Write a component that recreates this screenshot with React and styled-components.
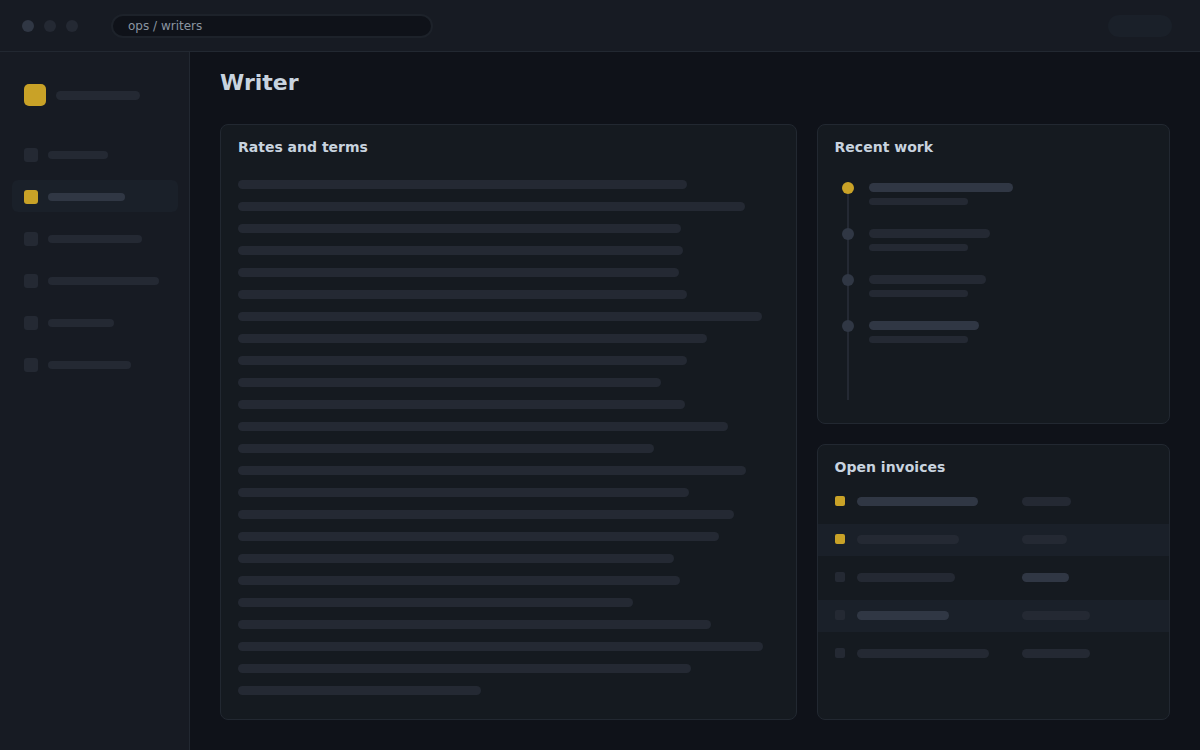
import React from "react";
import styled, { createGlobalStyle, ThemeProvider } from "styled-components";

const theme = {
  page: "#0f1219",
  chrome: "#171b23",
  card: "#151a20",
  line: "#222831",
  raised: "#1a2029",
  muted: "#242933",
  strong: "#303744",
  accent: "#c9a227",
  heading: "#c8d3df",
  text: "#8b95a1",
};

const GlobalStyle = createGlobalStyle`
  *, *::before, *::after { box-sizing: border-box; }
  body {
    margin: 0;
    background: ${theme.page};
    font-family: "DejaVu Sans", sans-serif;
  }
  ul, ol { list-style: none; margin: 0; padding: 0; }
`;

const Shell = styled.div`
  display: flex;
  flex-direction: column;
  min-height: 100vh;
`;

const TopBar = styled.header`
  display: flex;
  align-items: center;
  height: 52px;
  padding: 0 28px 0 22px;
  background: ${(p) => p.theme.chrome};
  border-bottom: 1px solid ${(p) => p.theme.line};
`;

const WindowDots = styled.div`
  display: flex;
  gap: 10px;
  margin-right: 33px;
`;

const WindowDot = styled.span`
  width: 12px;
  height: 12px;
  border-radius: 50%;
  background: ${(p) => (p.$strong ? p.theme.strong : p.theme.muted)};
`;

const AddressInput = styled.input`
  width: 322px;
  height: 24px;
  padding: 0 15px;
  border: 2px solid #1d222a;
  border-radius: 12px;
  background: ${(p) => p.theme.page};
  color: ${(p) => p.theme.text};
  font: 12px "DejaVu Sans", sans-serif;
  outline: none;
`;

const AccountButton = styled.button`
  width: 64px;
  height: 22px;
  margin-left: auto;
  padding: 0;
  border: 0;
  border-radius: 11px;
  background: ${(p) => p.theme.raised};
`;

const Body = styled.div`
  display: flex;
  flex: 1;
`;

const Sidebar = styled.aside`
  flex: none;
  width: 190px;
  padding: 32px 11px 32px 12px;
  background: ${(p) => p.theme.chrome};
  border-right: 1px solid ${(p) => p.theme.line};
`;

const Brand = styled.div`
  display: flex;
  align-items: center;
  gap: 10px;
  margin-bottom: 32px;
  padding: 0 12px;
`;

const BrandMark = styled.span`
  width: 22px;
  height: 22px;
  border-radius: 5px;
  background: ${(p) => p.theme.accent};
`;

const Bar = styled.span`
  display: block;
  width: ${(p) => p.$width};
  height: ${(p) => p.$height || 9}px;
  border-radius: 5px;
  background: ${(p) => (p.$strong ? p.theme.strong : p.theme.muted)};
`;

const NavList = styled.ul`
  display: flex;
  flex-direction: column;
  gap: 10px;
`;

const NavLink = styled.a`
  display: flex;
  align-items: center;
  gap: 10px;
  height: 32px;
  padding: 2px 12px 0;
  border-radius: 6px;
  background: ${(p) => (p.$active ? p.theme.raised : "transparent")};
`;

const Marker = styled.span`
  width: ${(p) => p.$size}px;
  height: ${(p) => p.$size}px;
  border-radius: ${(p) => p.$radius}px;
  background: ${(p) => (p.$active ? p.theme.accent : p.theme.muted)};
`;

const Main = styled.main`
  display: flex;
  flex: 1;
  flex-direction: column;
  min-width: 0;
  padding: 16px 30px 30px;
`;

const PageTitle = styled.h1`
  margin: 0 0 26px;
  color: ${(p) => p.theme.heading};
  font-size: 22px;
  line-height: 30px;
`;

const Columns = styled.div`
  display: grid;
  flex: 1;
  grid-template-columns: 62fr 38fr;
  gap: 20px;
`;

const SideColumn = styled.div`
  display: grid;
  grid-template-rows: 52fr 48fr;
  gap: 20px;
`;

const Card = styled.section`
  display: flex;
  flex-direction: column;
  min-width: 0;
  padding: 12px 0 23px;
  border: 1px solid ${(p) => p.theme.line};
  border-radius: 8px;
  background: ${(p) => p.theme.card};
`;

const CardTitle = styled.h2`
  margin: 0;
  padding: 0 17px;
  color: ${(p) => p.theme.heading};
  font-size: 14px;
  line-height: 20px;
`;

const TermLines = styled.div`
  display: flex;
  flex-direction: column;
  gap: 13px;
  padding: 23px 17px 0;
`;

const Timeline = styled.ol`
  display: flex;
  flex: 1;
  flex-direction: column;
  gap: 22px;
  margin: 25px 17px 0;
  background: linear-gradient(${(p) => p.theme.muted}, ${(p) => p.theme.muted}) 12px 0 / 2px 100% no-repeat;
`;

const TimelineItem = styled.li`
  display: flex;
  gap: 15px;
  height: 24px;
  padding-left: 7px;
`;

const TimelineDot = styled.span`
  flex: none;
  width: 12px;
  height: 12px;
  border-radius: 50%;
  background: ${(p) => (p.$active ? p.theme.accent : p.theme.strong)};
`;

const TimelineText = styled.div`
  display: flex;
  flex: 1;
  flex-direction: column;
  gap: 6px;
  padding-top: 1px;
`;

const InvoiceList = styled.ul`
  display: flex;
  flex-direction: column;
  gap: 6px;
  padding-top: 9px;
`;

const InvoiceRow = styled.li`
  display: grid;
  grid-template-columns: 10px 54fr 46fr;
  gap: 12px;
  align-items: end;
  height: 32px;
  padding: 0 17px 12px;

  &:nth-child(even) {
    background: ${(p) => p.theme.raised};
  }
`;

const navItems = [
  { id: "home", width: "60px" },
  { id: "writers", width: "77px", active: true },
  { id: "projects", width: "94px" },
  { id: "assignments", width: "111px" },
  { id: "reports", width: "66px" },
  { id: "settings", width: "83px" },
];

const termWidths = [
  83.1, 93.8, 81.9, 82.3, 81.6, 83, 96.9, 86.8, 83, 78.3, 82.7, 90.6,
  77, 94, 83.4, 91.8, 89, 80.7, 81.8, 73.1, 87.5, 97.1, 83.8, 45,
];

const workItems = [
  { title: "51%", strong: true, active: true },
  { title: "43%" },
  { title: "41.5%" },
  { title: "39%", strong: true },
];

const invoices = [
  { name: "79.4%", amount: "38%", open: true, nameStrong: true },
  { name: "67%", amount: "35%", open: true },
  { name: "64.5%", amount: "36.4%", amountStrong: true },
  { name: "60.5%", amount: "52.5%", nameStrong: true },
  { name: "86.5%", amount: "52.6%" },
];

export default function App() {
  return (
    <ThemeProvider theme={theme}>
      <GlobalStyle />
      <Shell>
        <TopBar>
          <WindowDots>
            <WindowDot $strong />
            <WindowDot />
            <WindowDot />
          </WindowDots>
          <AddressInput type="text" aria-label="Address" defaultValue="ops / writers" />
          <AccountButton type="button" aria-label="Account" />
        </TopBar>
        <Body>
          <Sidebar>
            <Brand>
              <BrandMark />
              <Bar $width="84px" />
            </Brand>
            <nav>
              <NavList>
                {navItems.map((item) => (
                  <li key={item.id}>
                    <NavLink href={`#${item.id}`} aria-label={item.id} $active={item.active}>
                      <Marker $size={14} $radius={3} $active={item.active} />
                      <Bar $width={item.width} $height={8} $strong={item.active} />
                    </NavLink>
                  </li>
                ))}
              </NavList>
            </nav>
          </Sidebar>
          <Main>
            <PageTitle>Writer</PageTitle>
            <Columns>
              <Card>
                <CardTitle>Rates and terms</CardTitle>
                <TermLines>
                  {termWidths.map((width, i) => (
                    <Bar key={i} $width={`${width}%`} />
                  ))}
                </TermLines>
              </Card>
              <SideColumn>
                <Card>
                  <CardTitle>Recent work</CardTitle>
                  <Timeline>
                    {workItems.map((item, i) => (
                      <TimelineItem key={i}>
                        <TimelineDot $active={item.active} />
                        <TimelineText>
                          <Bar $width={item.title} $strong={item.strong} />
                          <Bar $width="35%" $height={7} />
                        </TimelineText>
                      </TimelineItem>
                    ))}
                  </Timeline>
                </Card>
                <Card>
                  <CardTitle>Open invoices</CardTitle>
                  <InvoiceList>
                    {invoices.map((row, i) => (
                      <InvoiceRow key={i}>
                        <Marker $size={10} $radius={2} $active={row.open} />
                        <Bar $width={row.name} $strong={row.nameStrong} />
                        <Bar $width={row.amount} $strong={row.amountStrong} />
                      </InvoiceRow>
                    ))}
                  </InvoiceList>
                </Card>
              </SideColumn>
            </Columns>
          </Main>
        </Body>
      </Shell>
    </ThemeProvider>
  );
}
